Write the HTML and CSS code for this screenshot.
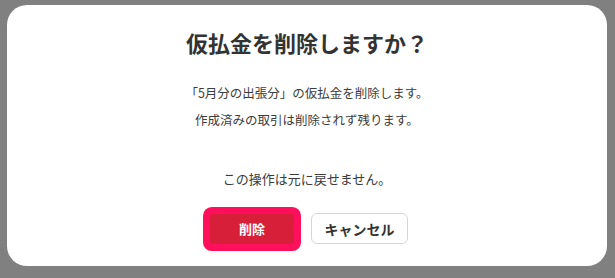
FILE: index.html
```html
<!DOCTYPE html>
<html lang="ja">
<head>
<meta charset="utf-8">
<link rel="stylesheet" href="styles.css">
</head>
<body>
<div class="dialog">
  <h1 class="title">仮払金を削除しますか？</h1>
  <div class="message">
    <p>「5月分の出張分」の仮払金を削除します。</p>
    <p>作成済みの取引は削除されず残ります。</p>
  </div>
  <p class="warning">この操作は元に戻せません。</p>
  <div class="actions">
    <button class="btn btn-danger">削除</button>
    <button class="btn btn-cancel">キャンセル</button>
  </div>
</div>
</body>
</html>
```
FILE: styles.css
```css
html, body {
  margin: 0;
  height: 100%;
}
body {
  background: #808080;
  padding: 5px 8px 12px 7px;
  box-sizing: border-box;
  font-family: "Noto Sans CJK JP", "Noto Sans", sans-serif;
  color: #333;
}
.dialog {
  background: #fff;
  border-radius: 20px;
  width: 600px;
  height: 261px;
  box-sizing: border-box;
  padding-top: 22px;
  display: flex;
  flex-direction: column;
  align-items: center;
}
.title {
  margin: 0;
  font-size: 22px;
  line-height: 30px;
  font-weight: 700;
  color: #333;
}
.message {
  margin-top: 22px;
}
.message p, .warning {
  margin: 0;
  font-size: 12.5px;
  line-height: 27px;
  text-align: center;
  color: #3c3c3c;
}
.warning {
  margin-top: 32px;
  font-size: 13px;
}
.actions {
  margin-top: 21px;
  margin-left: 4px;
  display: flex;
  gap: 17px;
  align-items: center;
}
.btn {
  font-family: inherit;
  font-weight: 700;
  font-size: 13px;
  cursor: pointer;
}
.btn-danger {
  width: 84px;
  height: 30px;
  background: #d81f39;
  color: #fff;
  border: none;
  border-radius: 3px;
  box-shadow: 0 0 0 7px #ff0f5c;
}
.btn-cancel {
  width: 97px;
  height: 31px;
  background: #fff;
  color: #333;
  border: 1px solid #d6d6d6;
  border-radius: 6px;
  font-size: 14px;
}
```
